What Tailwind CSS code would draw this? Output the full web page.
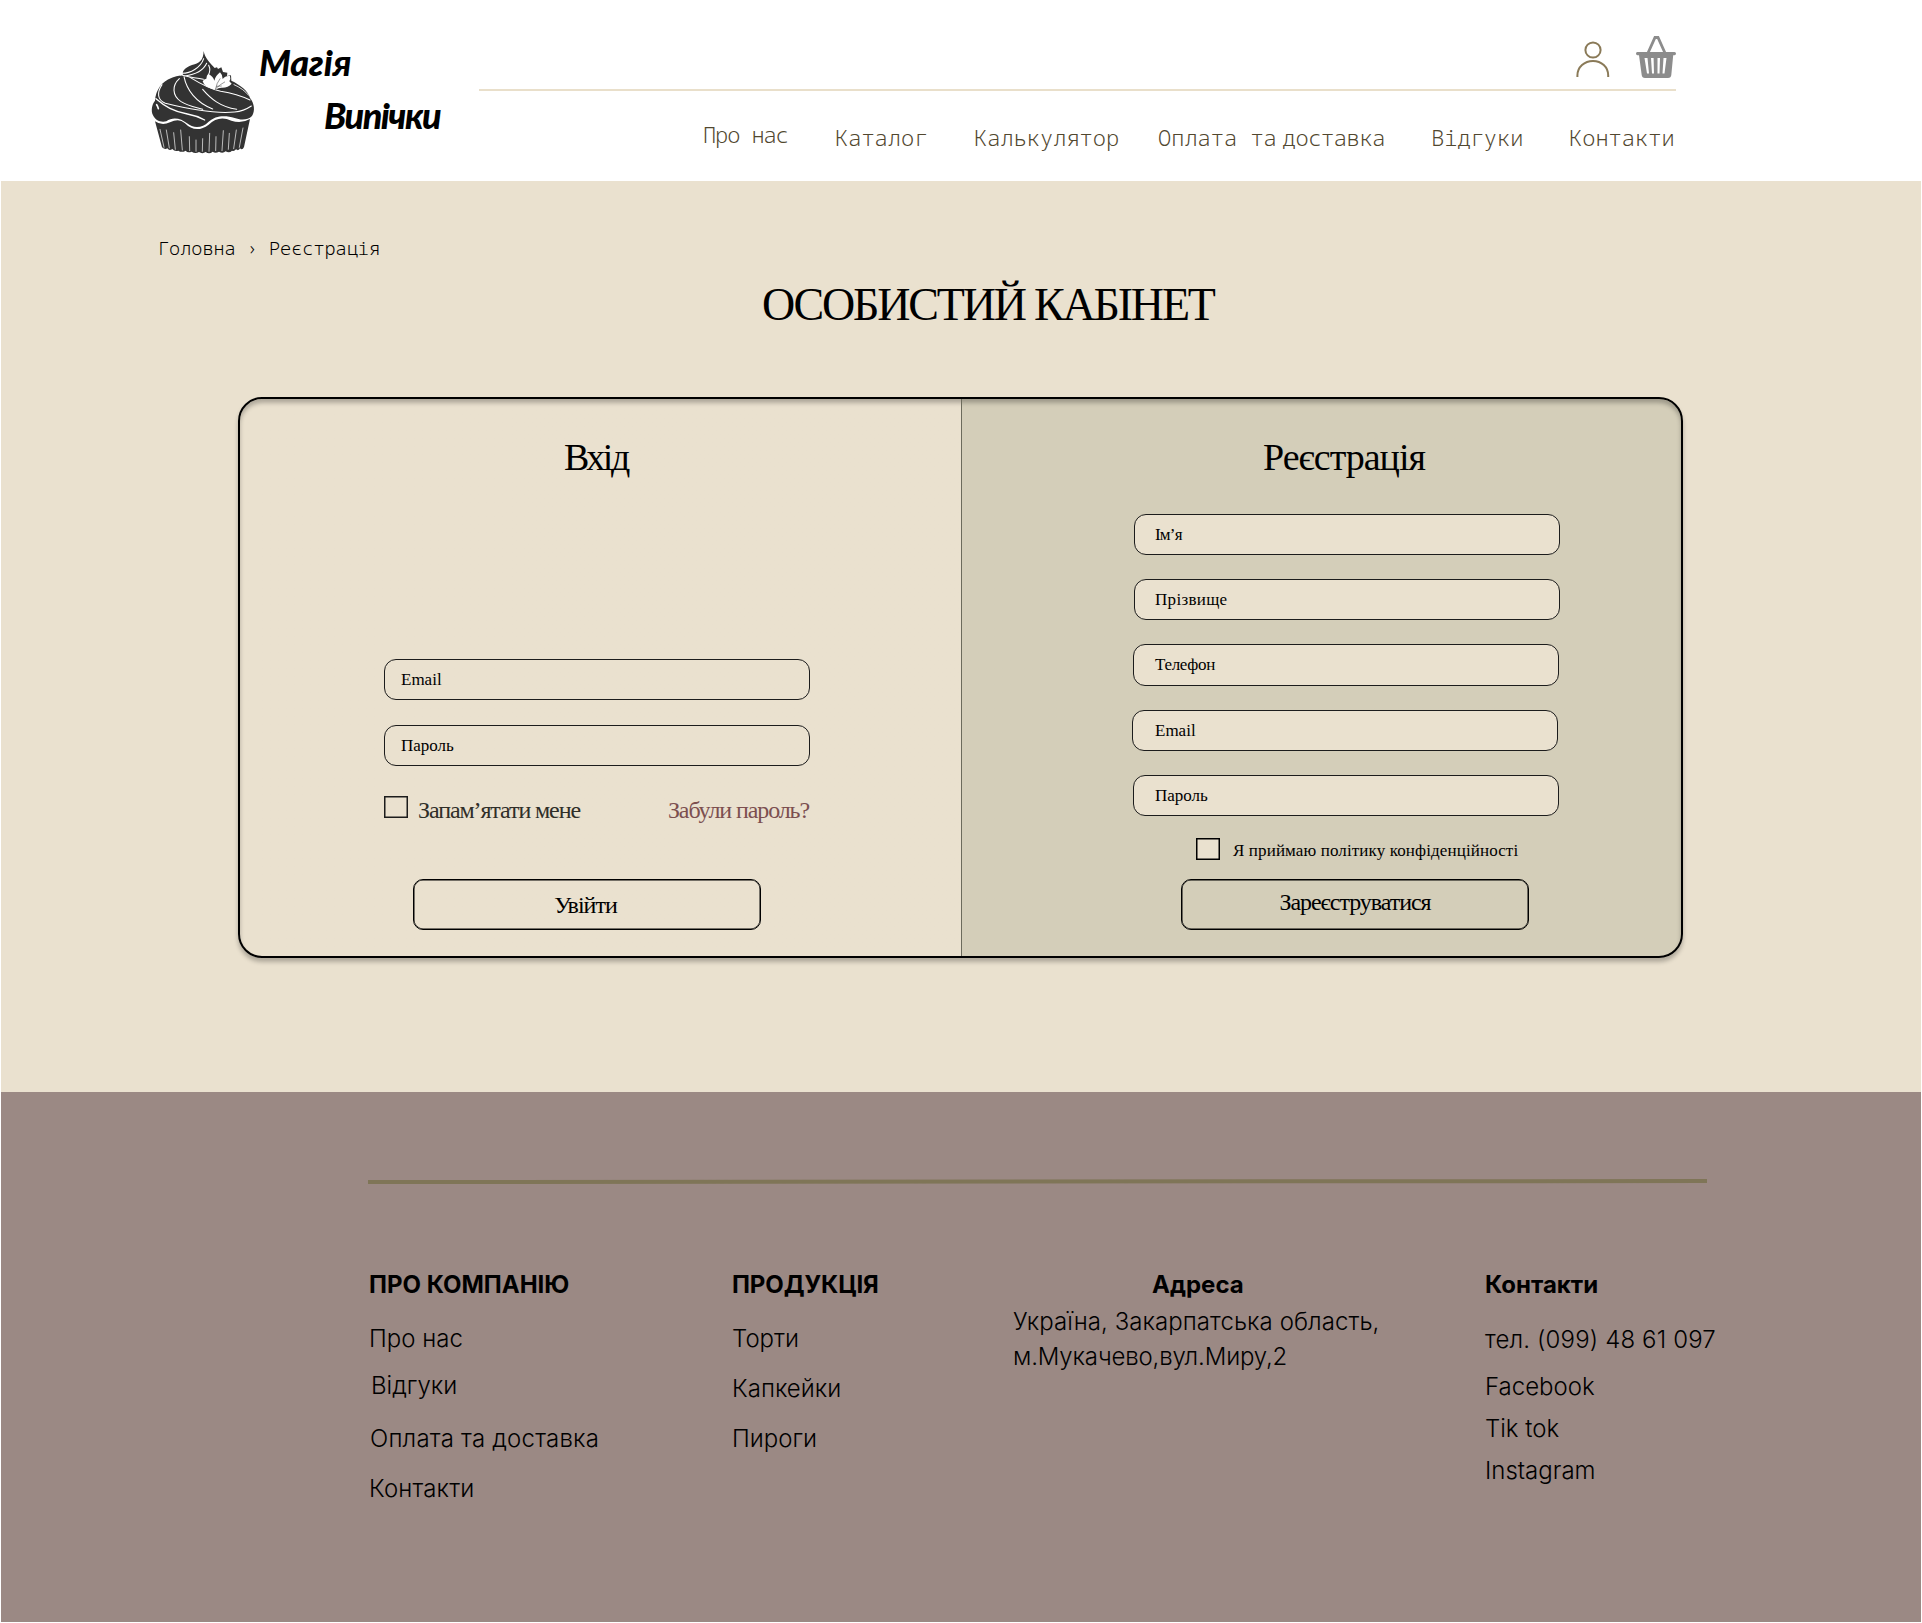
<!DOCTYPE html>
<html lang="uk">
<head>
<meta charset="utf-8">
<title>Магія Випічки</title>
<script src="https://cdn.jsdelivr.net/npm/@tailwindcss/browser@4"></script>
</head>
<body class="bg-white text-black">
<div class="mx-px h-[1622px] w-[1920px] overflow-hidden">

  <!-- Header -->
  <header class="flex h-[181px] bg-white">
    <a class="flex w-[478px] shrink-0 pl-[139px]">
      <svg class="mt-10 h-[125px] w-[110px] shrink-0" viewBox="0 0 330 375" overflow="visible" fill="none" stroke-linecap="round" stroke-linejoin="round">
        <path fill="#333" d="M191 33C194 54 212 71 224 84L231 82L234 87L244 82L249 96L262 98L261 108L273 106L274 122C300 134 325 153 330 174C343 190 346 213 336 228C322 242 300 240 284 234C256 225 226 226 205 246C188 264 160 266 141 250C124 235 98 229 79 244C62 249 45 240 39 226C32 212 36 192 45 182C47 150 66 124 94 114C110 108 118 108 129 106C124 90 142 79 164 73C182 66 190 58 191 33Z"/>
        <path fill="#333" d="M45 244Q66 259 90 247Q117 233 134 249Q167 283 206 254Q236 225 274 242Q304 252 330 237L312 321Q307 332 300 325Q296 334 288 328Q282 336 276 332Q268 340 257 334Q248 342 237 335Q226 341 218 335Q208 344 197 336Q187 343 177 336Q166 343 155 335Q143 340 137 332Q125 339 115 332Q104 336 97 327Q88 334 82 325Q75 330 66 322Z"/>
        <g stroke="#fff" stroke-width="3.2">
          <path d="M127 100C150 100 182 84 191 56M134 108C166 104 190 92 200 70M206 76Q214 92 204 106M128 106C150 114 168 112 190 118"/>
          <path d="M132 110C140 150 168 188 218 207M118 116C96 136 96 166 122 184C144 198 168 202 188 208"/>
          <path d="M66 134C50 158 52 180 76 190C140 206 220 222 284 216C306 214 322 206 334 198"/>
          <path d="M48 176C76 200 100 214 142 222Q170 227 194 240" stroke-width="4"/>
          <path d="M150 112C176 128 206 146 242 154C278 160 304 168 330 180M188 148C212 176 240 200 290 208"/>
          <path d="M282 134Q310 146 326 166" stroke-width="2.5"/>
          <path d="M50 194Q54 200 55 206" stroke-width="5"/>
        </g>
        <path fill="#fff" d="M226 149C212 146 194 142 188 124Q192 117 199 116Q199 106 206 102Q220 110 223 122Q226 108 240 97Q249 106 248 117Q256 106 270 108Q273 116 268 124L275 131Q264 144 244 143Q236 143 226 149Z"/>
        <g stroke="#333" stroke-width="1.5"><path d="M226 149Q230 128 240 116M228 145Q242 132 254 126M230 139L244 138"/></g>
        <g stroke="#fff" stroke-width="2"><path d="M60 268L72 322M79 270L88 324M101 278L106 328M122 270L127 330M148 290L149 332M168 300V334M188 296L187 334M209 280L207 334M228 290L227 332M250 272L246 332M268 280L265 328M289 270L281 326M309 264L298 322"/></g>
      </svg>
      <span class="-ml-px flex flex-col whitespace-nowrap pt-[44px] font-['Lato'] text-[36px] leading-none font-black italic">
        <span class="pl-[10px] tracking-[-0.1px]">Магія</span>
        <span class="mt-[17px] pl-[75px] tracking-[-1.5px]">Випічки</span>
      </span>
    </a>
    <div class="flex w-[1197px] flex-col">
      <div class="flex h-[91px] items-start justify-end border-b-2 border-[#e9dfca]">
        <svg class="mt-[41px] h-[36px] w-[36px]" viewBox="0 0 36 36" fill="none" stroke="#8a7a58" stroke-width="2"><circle cx="17" cy="9" r="7.600"/><path d="M1.400 36V34.500C1.400 26 8.500 20 17 20S32.200 26 32.200 34.500V36"/></svg>
        <svg class="mt-[36px] ml-[24px] h-[42px] w-[40px]" viewBox="0 0 40 42"><path d="M12 17L19 1.500H22L29 17" fill="none" stroke="#8c8c8c" stroke-width="2.800"/><path fill="#8c8c8c" fill-rule="evenodd" d="M1.500 16H38.500Q40 16 40 17.500T38.500 19.200H37.200L35.300 39Q35 42 32 42H9Q6 42 5.700 39L3 19.200H1.500Q0 19.200 0 17.500T1.500 16ZM8.500 22L11 37.500H13L11.500 22ZM15 22L16 37.500H18L17.600 22ZM21.500 22V37.500H23.500L24 22ZM27.500 22L26.500 37.500H28.500L30.500 22Z"/></svg>
      </div>
      <nav class="mt-[35px] ml-[224px] grid grid-cols-[132px_139px_184px_273px_138px_1fr] whitespace-nowrap font-['Noto_Sans_Mono','Liberation_Mono',monospace] text-[22px] leading-none font-light text-[#51472f]">
        <a class="-mt-[3px] tracking-[-1.1px]">Про нас</a>
        <a>Каталог</a>
        <a>Калькулятор</a>
        <a>Оплата та<span class="-ml-[7px] tracking-[-0.4px]"> доставка</span></a>
        <a>Відгуки</a>
        <a>Контакти</a>
      </nav>
    </div>
  </header>

  <!-- Account -->
  <main class="h-[911px] bg-[#eae1cf] font-['Liberation_Serif',serif]">
    <div class="h-[101px] pt-[58px] pl-[157px] font-['Noto_Sans_Mono','Liberation_Mono',monospace] text-[18.5px] leading-none font-light">Головна › Реєстрація</div>
    <h1 class="h-[115px] pl-[761px] text-[46px] leading-none tracking-[-2.2px]">ОСОБИСТИЙ КАБІНЕТ</h1>

    <div class="ml-[237px] flex h-[561px] w-[1445px] rounded-[24px] border-2 border-black bg-linear-to-r from-[#eae1cf] from-50% to-[#d4ceb9] to-50% shadow-[0_4px_4px_rgba(0,0,0,0.25),inset_0_4px_4px_rgba(0,0,0,0.25)]">
      <section class="flex w-[721px] flex-col pl-[144px]">
        <h2 class="mt-[39px] h-[221px] pl-[180px] text-[38px] leading-none tracking-[-2.5px]">Вхід</h2>
        <div class="flex h-[41px] w-[426px] items-center rounded-xl border border-[#1c1c1c] pl-4 text-[17px] leading-none">Email</div>
        <div class="mt-[25px] flex h-[41px] w-[426px] items-center rounded-xl border border-[#1c1c1c] pl-4 text-[17px] leading-none">Пароль</div>
        <div class="mt-[30px] flex h-[28px] w-[426px] text-[24px] leading-none tracking-[-1.1px] whitespace-nowrap">
          <span class="h-[22px] w-6 border-[1.5px] border-[#1c1c1c] shadow-[inset_0_0_0_0.5px_#1c1c1c]"></span>
          <span class="mt-[2px] ml-[10px] text-[#2f2e28]">Запам’ятати мене</span>
          <a class="mt-[2px] mr-px ml-auto text-[#7c4f4f]">Забули пароль?</a>
        </div>
        <button class="mt-[55px] ml-[29px] flex h-[51px] w-[348px] items-center justify-center rounded-[10px] border-[1.5px] border-black pr-[3px] text-[24px] leading-none tracking-[-1px] shadow-[inset_0_0_0_0.5px_#000]">Увійти</button>
      </section>
      <section class="flex w-[720px] flex-col border-l border-[#6c6b5c] pl-[172px]">
        <h2 class="mt-[39px] h-[76px] pl-[129px] text-[38px] leading-none tracking-[-1px]">Реєстрація</h2>
        <div class="flex flex-col gap-6 text-[17px] leading-none">
          <div class="flex h-[41.200px] w-[426px] items-center rounded-xl border border-[#1c1c1c] bg-[#eae1cf] pl-5 tracking-[-0.8px]">Ім’я</div>
          <div class="flex h-[41.200px] w-[426px] items-center rounded-xl border border-[#1c1c1c] bg-[#eae1cf] pl-5 tracking-[0.3px]">Прізвище</div>
          <div class="-ml-px flex h-[41.200px] w-[426px] items-center rounded-xl border border-[#1c1c1c] bg-[#eae1cf] pl-[21px] tracking-[-0.3px]">Телефон</div>
          <div class="-ml-[2px] flex h-[41.200px] w-[426px] items-center rounded-xl border border-[#1c1c1c] bg-[#eae1cf] pl-[22px]">Email</div>
          <div class="-ml-px flex h-[41.200px] w-[426px] items-center rounded-xl border border-[#1c1c1c] bg-[#eae1cf] pl-[21px]">Пароль</div>
        </div>
        <div class="mt-[22px] ml-[62px] flex h-[22px] text-[17px] leading-none tracking-[0.12px]">
          <span class="h-[22px] w-6 border-[1.5px] border-black bg-[#eae1cf] shadow-[inset_0_0_0_0.5px_#000]"></span>
          <span class="mt-[4px] ml-[13px]">Я приймаю політику конфіденційності</span>
        </div>
        <button class="mt-[19px] ml-[47px] flex h-[51px] w-[348px] items-center justify-center rounded-[10px] border-[1.5px] border-black pb-1 text-[24px] leading-none tracking-[-1.05px] shadow-[inset_0_0_0_0.5px_#000]">Зареєструватися</button>
      </section>
    </div>
  </main>

  <!-- Footer -->
  <footer class="h-[530px] bg-[#9b8984] pt-[87px] font-['Inter',sans-serif] text-[24px] leading-none font-light whitespace-nowrap">
    <svg class="ml-[367px] h-[5px] w-[1340px]" viewBox="0 0 1340 5"><path d="M0 3L1339 2" stroke="#7f7557" stroke-width="4"/></svg>
    <div class="mt-[89px] ml-[368px] grid grid-cols-[363px_281px_472px_1fr]">
      <div class="flex flex-col">
        <h3 class="font-bold">ПРО КОМПАНІЮ</h3>
        <a class="mt-[30px]">Про нас</a>
        <a class="mt-[23px] pl-[2px]">Відгуки</a>
        <a class="mt-[29px] pl-px tracking-[0.2px]">Оплата та доставка</a>
        <a class="mt-[26px] tracking-[0.15px]">Контакти</a>
      </div>
      <div class="flex flex-col">
        <h3 class="font-bold tracking-[-0.1px]">ПРОДУКЦІЯ</h3>
        <a class="mt-[30px]">Торти</a>
        <a class="mt-[26px]">Капкейки</a>
        <a class="mt-[26px]">Пироги</a>
      </div>
      <div class="flex flex-col">
        <h3 class="pl-[139px] font-bold">Адреса</h3>
        <p class="mt-[7px] leading-[35px] tracking-[0.06px]">Україна, Закарпатська область,<br><span class="tracking-[-0.15px]">м.Мукачево,вул.Миру,2</span></p>
      </div>
      <div class="flex flex-col">
        <h3 class="font-bold">Контакти</h3>
        <a class="mt-[31px] tracking-[0.15px]">тел. (099) 48 61 097</a>
        <a class="mt-[23px]">Facebook</a>
        <a class="mt-[18px]">Tik tok</a>
        <a class="mt-[18px]">Instagram</a>
      </div>
    </div>
  </footer>
</div>
</body>
</html>
